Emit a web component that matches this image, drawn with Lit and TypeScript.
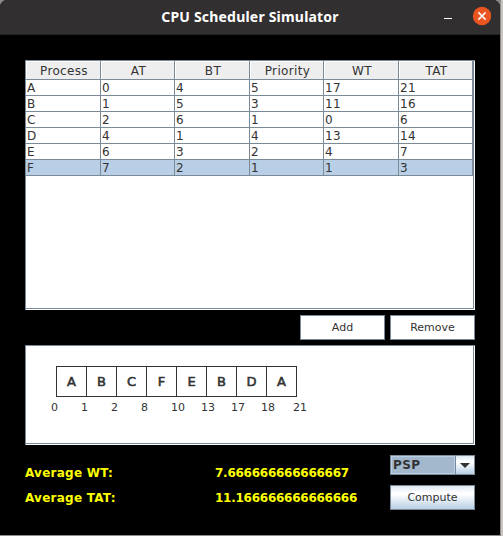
import { LitElement, html, css } from "lit";
import { customElement, state } from "lit/decorators.js";
import { classMap } from "lit/directives/class-map.js";

@customElement("title-bar")
class TitleBar extends LitElement {
  static styles = css`
    :host { display: grid; grid-template-columns: 1fr auto; align-items: center; position: relative; box-sizing: border-box; height: 35px; background: #322f30; border-bottom: 1px solid #232122; border-radius: 7px 7px 0 0; color: #fff; }
    .title { text-align: center; font: bold 14px/34px "Noto Sans", sans-serif; letter-spacing: 0.2px; }
    .controls { position: absolute; right: 9px; top: 6px; width: 54px; height: 20px; }
    svg { display: block; }
  `;
  render() {
    return html`<div class="title">CPU Scheduler Simulator</div>
      <div class="controls">
        <svg width="54" height="20" viewBox="0 0 54 20">
          <path d="M7 12.5h8" stroke="#fff" />
          <circle cx="45" cy="10" r="9.2" fill="#e95420" />
          <path d="M41.4 6.4l7.2 7.2M48.6 6.4l-7.2 7.2" stroke="#fff" stroke-width="1.5" />
        </svg>
      </div>`;
  }
}

@customElement("process-table")
class ProcessTable extends LitElement {
  static styles = css`
    :host { display: block; box-sizing: border-box; height: 250px; background: #fff; border: 1px solid #7a8a99; border-right: 0; border-bottom: 0; padding: 0 1px 1px 0; }
    .inner { box-sizing: border-box; height: 248px; border-right: 1px solid #7a8a99; border-bottom: 1px solid #7a8a99; }
    .row { display: grid; grid-template-columns: 75px 74px 75px 74px 75px 74px; height: 16px; }
    .row > div { box-sizing: border-box; height: 16px; border-right: 1px solid #7a8a99; border-bottom: 1px solid #7a8a99; padding-left: 1px; font: 12px/17px "DejaVu Sans", sans-serif; color: #333; white-space: nowrap; letter-spacing: 0.35px; }
    .row.head { height: 19px; }
    .row.head > div { height: 19px; background: #eee; box-shadow: inset 1px 1px #fff; text-align: center; line-height: 21px; padding-left: 2px; }
    .row.selected { background: #b8cfe5; }
  `;
  @state() selected = "F";
  columns = ["Process", "AT", "BT", "Priority", "WT", "TAT"];
  rows = [
    ["A", "0", "4", "5", "17", "21"],
    ["B", "1", "5", "3", "11", "16"],
    ["C", "2", "6", "1", "0", "6"],
    ["D", "4", "1", "4", "13", "14"],
    ["E", "6", "3", "2", "4", "7"],
    ["F", "7", "2", "1", "1", "3"],
  ];
  render() {
    return html`<div class="inner">
      <div class="row head">${this.columns.map((c) => html`<div>${c}</div>`)}</div>
      ${this.rows.map(
        (r) => html`<div class=${classMap({ row: true, selected: r[0] === this.selected })} @click=${() => (this.selected = r[0])}>
          ${r.map((v) => html`<div>${v}</div>`)}
        </div>`
      )}
    </div>`;
  }
}

@customElement("gantt-chart")
class GanttChart extends LitElement {
  static styles = css`
    :host { display: block; box-sizing: border-box; height: 100px; background: #fff; border: 1px solid #7a8a99; border-right: 0; border-bottom: 0; padding: 0 1px 1px 0; color: #333; }
    .inner { box-sizing: border-box; height: 98px; border-right: 1px solid #7a8a99; border-bottom: 1px solid #7a8a99; padding: 20px 0 0 30px; }
    .bars { display: flex; }
    .bar { box-sizing: border-box; width: 30px; height: 31px; border: 1px solid #333; border-right: 0; font: 13px/30px "DejaVu Sans", sans-serif; -webkit-text-stroke: 0.6px #333; text-align: center; }
    .bar:last-child { width: 31px; border-right: 1px solid #333; }
    .times { display: flex; margin: 4px 0 0 -5px; }
    .time { width: 30px; font: 11px/14px "DejaVu Sans", sans-serif; }
    .time.end { padding-left: 2px; }
  `;
  slices = ["A", "B", "C", "F", "E", "B", "D", "A"];
  times = [0, 1, 2, 8, 10, 13, 17, 18, 21];
  render() {
    const last = this.times.length - 1;
    return html`<div class="inner">
      <div class="bars">${this.slices.map((s) => html`<div class="bar">${s}</div>`)}</div>
      <div class="times">${this.times.map((t, i) => html`<div class=${classMap({ time: true, end: i === last })}>${t}</div>`)}</div>
    </div>`;
  }
}

@customElement("app-root")
class AppRoot extends LitElement {
  static styles = css`
    :host { display: block; box-sizing: border-box; width: 503px; height: 536px; padding: 0 3px 1px 0; background: linear-gradient(90deg, #8e8b8a 500px, #8e8b8a 501px, #c9c5c3 501px); overflow: hidden; }
    .window { height: 535px; background: #000; border-radius: 7px 7px 0 0; }
    .body { padding: 25px 25px 0; }
    .actions { display: flex; justify-content: flex-end; gap: 5px; padding: 5px 0; }
    button { box-sizing: border-box; display: block; width: 85px; height: 25px; padding: 0; border: 1px solid #7a8a99; border-radius: 0; background: #fff; color: #333; font: 11px/22px "DejaVu Sans", sans-serif; text-align: center; }
    .footer { display: grid; grid-template-columns: 190px 175px 85px; padding-top: 10px; }
    .stats { padding-top: 6px; font: bold 12px/25px "DejaVu Sans", sans-serif; color: #ff0; white-space: nowrap; letter-spacing: 0.25px; }
    .stats.values { letter-spacing: -0.25px; }
    .side { display: grid; row-gap: 10px; align-content: start; }
    .combo { box-sizing: border-box; display: grid; grid-template-columns: 64px 1fr; height: 20px; border: 1px solid #7a8a99; }
    .value { border: 1px solid #b8cfe5; background: #a3b8cc; color: #333; font: bold 12px/16px "DejaVu Sans", sans-serif; padding-left: 1px; letter-spacing: 0.4px; }
    .arrow { border-left: 1px solid #7a8a99; display: grid; place-items: center; }
    .arrow, .compute { background: linear-gradient(#dde8f3, #fff 30%, #fff 36%, #b8cfe5); }
  `;
  render() {
    return html`<div class="window">
      <title-bar></title-bar>
      <div class="body">
        <process-table></process-table>
        <div class="actions"><button>Add</button><button>Remove</button></div>
        <gantt-chart></gantt-chart>
        <div class="footer">
          <div class="stats"><div>Average WT:</div><div>Average TAT:</div></div>
          <div class="stats values"><div>7.666666666666667</div><div>11.166666666666666</div></div>
          <div class="side">
            <div class="combo">
              <div class="value">PSP</div>
              <div class="arrow"><svg width="10" height="5" viewBox="0 0 10 5"><path d="M0 0h10L5 5z" fill="#333" /></svg></div>
            </div>
            <button class="compute">Compute</button>
          </div>
        </div>
      </div>
    </div>`;
  }
}
